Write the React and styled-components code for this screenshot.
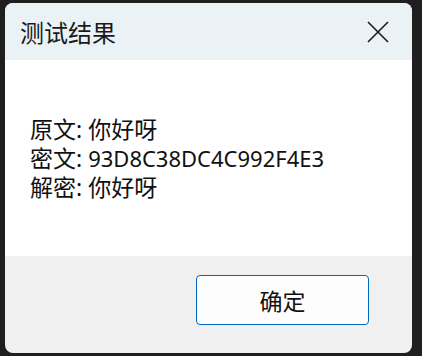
import React from "react";
import styled, { createGlobalStyle } from "styled-components";

const GlobalStyle = createGlobalStyle`
  html, body {
    margin: 0;
    padding: 0;
    background-color: #1f1f1f;
  }
  body {
    font-family: "Noto Sans", "Noto Sans CJK SC", sans-serif;
  }
`;

const Window = styled.div`
  margin: 3px 0 0 5px;
  width: 407px;
  height: 350px;
  border-radius: 8px;
  overflow: hidden;
  display: flex;
  flex-direction: column;
  background-color: #f0f0f0;
`;

const TitleBar = styled.div`
  height: 57px;
  display: flex;
  align-items: center;
  justify-content: space-between;
  padding: 0 22px 0 15px;
  background-color: #eaf2f6;
`;

const Title = styled.span`
  font-size: 24px;
  color: #1a1a1a;
  font-family: "Noto Sans CJK SC", sans-serif;
`;

const CloseButton = styled.button`
  border: none;
  background: none;
  padding: 0;
  width: 24px;
  height: 24px;
  display: flex;
  align-items: center;
  justify-content: center;
  cursor: pointer;
`;

const Body = styled.div`
  height: 196px;
  background-color: #ffffff;
  padding: 55px 0 0 25px;
  box-sizing: border-box;
`;

const Line = styled.div`
  font-size: 23px;
  line-height: 29px;
  color: #111;
  font-family: "Noto Sans", "Noto Sans CJK SC", sans-serif;
  white-space: nowrap;
`;

const Value = styled.span`
  font-size: ${(p) => (p.$latin ? "22px" : "23px")};
`;

const Footer = styled.div`
  flex: 1;
  display: flex;
  justify-content: flex-end;
  align-items: flex-start;
  padding: 19px 43px 0 0;
`;

const Button = styled.button`
  width: 173px;
  height: 50px;
  border: 1px solid #0067c0;
  border-radius: 4px;
  background-color: #fdfdfd;
  font-size: 23px;
  color: #111;
  font-family: "Noto Sans CJK SC", sans-serif;
  cursor: pointer;
`;

const rows = [
  { label: "原文", value: "你好呀" },
  { label: "密文", value: "93D8C38DC4C992F4E3", latin: true },
  { label: "解密", value: "你好呀" },
];

export default function App() {
  return (
    <>
      <GlobalStyle />
      <Window>
        <TitleBar>
          <Title>测试结果</Title>
          <CloseButton aria-label="关闭">
            <svg width="22" height="22" viewBox="0 0 22 22">
              <path d="M1 1 L21 21 M21 1 L1 21" stroke="#1a1a1a" strokeWidth="1.6" />
            </svg>
          </CloseButton>
        </TitleBar>
        <Body>
          {rows.map((r) => (
            <Line key={r.label}>
              {r.label}: <Value $latin={r.latin}>{r.value}</Value>
            </Line>
          ))}
        </Body>
        <Footer>
          <Button>确定</Button>
        </Footer>
      </Window>
    </>
  );
}
